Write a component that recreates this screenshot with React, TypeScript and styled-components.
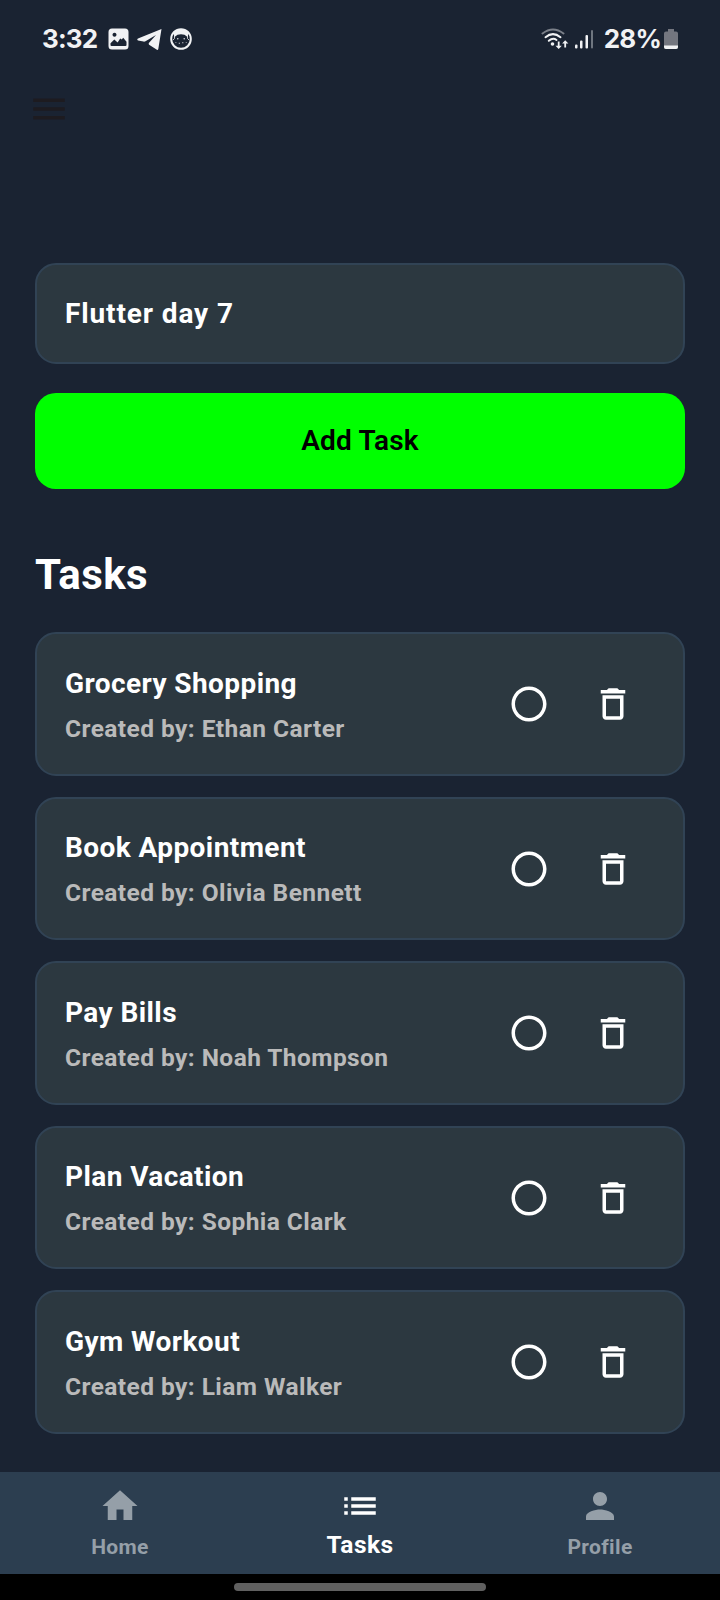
import React from "react";
import styled, { createGlobalStyle } from "styled-components";

const GlobalStyle = createGlobalStyle`
  *, *::before, *::after { box-sizing: border-box; }
  html, body { margin: 0; padding: 0; background: #1a2332; }
  body { font-family: Roboto, "Liberation Sans", sans-serif; }
`;

const Screen = styled.div`
  width: 720px;
  height: 1600px;
  display: flex;
  flex-direction: column;
  background: #1a2332;
  overflow: hidden;
`;

const StatusBar = styled.header`
  height: 77px;
  flex: none;
  padding: 0 42px;
  display: flex;
  align-items: center;
  justify-content: space-between;
  color: #f1f2f4;
`;

const StatusGroup = styled.div<{ $gap: number }>`
  display: flex;
  align-items: center;
  gap: ${(p) => p.$gap}px;
`;

const StatusText = styled.span`
  font-family: Inter, Roboto, sans-serif;
  font-size: 26px;
  line-height: 32px;
  font-weight: 700;
  letter-spacing: -0.8px;
`;

const Clock = styled(StatusText)`
  margin-right: 3px;
`;

const BatteryStatus = styled.div`
  display: flex;
  align-items: center;
  gap: 3px;
  margin-left: 4px;
`;

const AppBar = styled.div`
  height: 65px;
  flex: none;
  padding: 11px 28px;
`;

const MenuButton = styled.button`
  display: block;
  border: 0;
  padding: 0;
  background: none;
  color: #1d1b20;
  line-height: 0;
`;

const Content = styled.main`
  flex: 1;
  min-height: 0;
  padding: 121px 35px 0;
  display: flex;
  flex-direction: column;
`;

const TaskInput = styled.div`
  height: 101px;
  flex: none;
  padding: 0 28px;
  display: flex;
  align-items: center;
  border: 2px solid #314355;
  border-radius: 21px;
  background: #2c3840;
  color: #fff;
  font-size: 28px;
  font-weight: 700;
  letter-spacing: 0.88px;
`;

const AddButton = styled.button`
  height: 96px;
  flex: none;
  margin-top: 28.5px;
  padding: 0;
  border: 0;
  border-radius: 21px;
  background: #00ff00;
  color: #000;
  font: 600 28px/32px Roboto, sans-serif;
  letter-spacing: 0.2px;
`;

const Heading = styled.h1`
  margin: 61px 0 32.5px;
  color: #fff;
  font-size: 42px;
  line-height: 50px;
  font-weight: 700;
  letter-spacing: 0.4px;
`;

const TaskList = styled.ul`
  list-style: none;
  margin: 0;
  padding: 0;
  display: flex;
  flex-direction: column;
  gap: 21px;
`;

const TaskCard = styled.li`
  height: 143.5px;
  flex: none;
  padding: 0 49px 0 28px;
  display: flex;
  align-items: center;
  border: 2px solid #314355;
  border-radius: 21px;
  background: #2c3840;
`;

const TaskText = styled.div`
  flex: 1;
  display: flex;
  flex-direction: column;
  gap: 9px;
  padding-top: 5px;
`;

const TaskTitle = styled.div`
  color: #fff;
  font-size: 28px;
  line-height: 36px;
  font-weight: 700;
  letter-spacing: 0.42px;
`;

const TaskAuthor = styled.div`
  color: #bababa;
  font-size: 24.5px;
  line-height: 36px;
  font-weight: 700;
  letter-spacing: 0.43px;
`;

const TaskActions = styled.div`
  display: flex;
  gap: 42px;
  padding-top: 1px;
  color: #fff;
`;

const NavBar = styled.nav`
  height: 102px;
  flex: none;
  display: flex;
  background: #2c3e50;
`;

const NavItem = styled.div<{ $active?: boolean }>`
  flex: 1;
  display: flex;
  flex-direction: column;
  align-items: center;
  padding-top: 12.5px;
  color: ${(p) => (p.$active ? "#fff" : "#959fa8")};
`;

const NavLabel = styled.span<{ $active?: boolean }>`
  font-size: ${(p) => (p.$active ? 24.5 : 21)}px;
  line-height: 30px;
  margin-top: ${(p) => (p.$active ? 3.5 : 5.5)}px;
  font-weight: 700;
  letter-spacing: ${(p) => (p.$active ? 0.45 : 0.35)}px;
`;

const GestureBar = styled.div`
  height: 26px;
  flex: none;
  padding-top: 9px;
  display: flex;
  justify-content: center;
  background: #000;
`;

const GesturePill = styled.div`
  width: 252px;
  height: 8px;
  border-radius: 4px;
  background: #606060;
`;

const Glyph = styled.svg`
  display: block;
  flex: none;
  fill: currentColor;
`;

const paths = {
  menu: "M3 18h18v-2H3v2zm0-5h18v-2H3v2zm0-7v2h18V6H3z",
  circle: "M12 2C6.47 2 2 6.47 2 12s4.47 10 10 10 10-4.47 10-10S17.53 2 12 2zm0 18c-4.42 0-8-3.58-8-8s3.58-8 8-8 8 3.58 8 8-3.58 8-8 8z",
  trash: "M6 19c0 1.1.9 2 2 2h8c1.1 0 2-.9 2-2V7H6v12zM8 9h8v10H8V9zm7.5-5l-1-1h-5l-1 1H5v2h14V4h-3.5z",
  home: "M10 20v-6h4v6h5v-8h3L12 3 2 12h3v8z",
  list: "M3 13h2v-2H3v2zm0 4h2v-2H3v2zm0-8h2V7H3v2zm4 4h14v-2H7v2zm0 4h14v-2H7v2zM7 7v2h14V7H7z",
  person: "M12 12c2.21 0 4-1.79 4-4s-1.79-4-4-4-4 1.79-4 4 1.79 4 4 4zm0 2c-2.67 0-8 1.34-8 4v2h16v-2c0-2.66-5.33-4-8-4z",
};

function Icon({ name }: { name: keyof typeof paths }) {
  return (
    <Glyph width="42" height="42" viewBox="0 0 24 24">
      <path d={paths[name]} />
    </Glyph>
  );
}

function PhotoIcon() {
  return (
    <Glyph width="21" height="22" viewBox="0 0 21 22">
      <path
        fillRule="evenodd"
        d="M4 0.5h13a3.5 3.5 0 0 1 3.5 3.5v14a3.5 3.5 0 0 1-3.5 3.5H4A3.5 3.5 0 0 1 .5 18V4A3.5 3.5 0 0 1 4 .5zM6.500 4.700a2 2 0 1 0 .01 0zM2.500 17v-1.800l3.800-3.600 3.300 2.800 2.600-4 1.600 1 1.400-1.600 3.300 4v3.200q0 1-1 1h-14q-1 0-1-1z"
      />
    </Glyph>
  );
}

function TelegramIcon() {
  return (
    <Glyph width="25" height="22" viewBox="0 0 25 22">
      <path d="M24.500 1 21.300 21 q-.4 1.400-1.800.6 L12.500 17 q-1.500-1.200-.2-2.500 L19 7 8.500 13.200 q-1 .6-2 .4 L1 12.400 q-1.500-.9 0-1.900z" />
    </Glyph>
  );
}

function CatIcon() {
  return (
    <Glyph width="22" height="22" viewBox="0 0 22 22">
      <circle cx="11" cy="11" r="9.800" fill="none" stroke="currentColor" strokeWidth="2" />
      <path d="M3.500 4Q11 -1 18.500 4L17.500 9 14.500 6.700Q11 6 7.500 6.700L4.500 9z" />
      <path d="M4.500 6v4.500l-1.500 1.500M17.500 6v4.500l1.500 1.500" fill="none" stroke="currentColor" strokeWidth=".8" />
      <circle cx="7.800" cy="10.800" r=".7" />
      <circle cx="14.200" cy="10.800" r=".7" />
      <path d="M8.800 14.800h1v1h-1zM12.300 14.200h1v1h-1zM5.500 14h.8v.8h-.8zM15.800 14h.8v.8h-.8z" />
    </Glyph>
  );
}

function WifiIcon() {
  return (
    <Glyph width="28" height="22" viewBox="0 0 28 22">
      <g fill="none" stroke="currentColor" strokeLinecap="round" strokeWidth="2">
        <path d="M1.500 5.500Q12 -2.500 22.500 5.500" opacity=".45" />
        <path d="M4.500 9.200Q12 3 19.500 9.200" />
        <path d="M7.800 12.800Q12 9.300 15.500 12" />
      </g>
      <circle cx="11.500" cy="16" r="1.800" />
      <path d="M16.800 13.500h1.800v4.300h2.200L17.700 21 14.500 17.800h2.300zM25.100 19.500h-1.800v-4h-2.200l3.100-3.300 3.200 3.300h-2.300z" />
    </Glyph>
  );
}

function SignalIcon() {
  return (
    <Glyph width="19" height="20" viewBox="0 0 19 20">
      <rect x="0" y="15.500" width="2.500" height="4" rx="1" />
      <rect x="5" y="11.500" width="2.500" height="8" rx="1" />
      <rect x="10.500" y="6" width="2.500" height="13.500" rx="1" />
      <rect x="16" y="1" width="2" height="18.500" rx="1" opacity=".4" />
    </Glyph>
  );
}

function BatteryIcon() {
  return (
    <Glyph width="14" height="20" viewBox="0 0 14 20">
      <path
        d="M4 0h6v2.500h2Q14 2.500 14 4.500V18q0 2-2 2H2q-2 0-2-2V4.500q0-2 2-2h2z"
        fill="#73767f"
      />
      <path d="M0 16.500h14V18q0 2-2 2H2q-2 0-2-2z" />
    </Glyph>
  );
}

const tasks = [
  { title: "Grocery Shopping", author: "Ethan Carter" },
  { title: "Book Appointment", author: "Olivia Bennett" },
  { title: "Pay Bills", author: "Noah Thompson" },
  { title: "Plan Vacation", author: "Sophia Clark" },
  { title: "Gym Workout", author: "Liam Walker" },
];

export default function App() {
  return (
    <>
      <GlobalStyle />
      <Screen>
        <StatusBar>
          <StatusGroup $gap={8}>
            <Clock>3:32</Clock>
            <PhotoIcon />
            <TelegramIcon />
            <CatIcon />
          </StatusGroup>
          <StatusGroup $gap={6}>
            <WifiIcon />
            <SignalIcon />
            <BatteryStatus>
              <StatusText>28%</StatusText>
              <BatteryIcon />
            </BatteryStatus>
          </StatusGroup>
        </StatusBar>
        <AppBar>
          <MenuButton aria-label="Menu">
            <Icon name="menu" />
          </MenuButton>
        </AppBar>
        <Content>
          <TaskInput>Flutter day 7</TaskInput>
          <AddButton>Add Task</AddButton>
          <Heading>Tasks</Heading>
          <TaskList>
            {tasks.map((t) => (
              <TaskCard key={t.title}>
                <TaskText>
                  <TaskTitle>{t.title}</TaskTitle>
                  <TaskAuthor>Created by: {t.author}</TaskAuthor>
                </TaskText>
                <TaskActions>
                  <Icon name="circle" />
                  <Icon name="trash" />
                </TaskActions>
              </TaskCard>
            ))}
          </TaskList>
        </Content>
        <NavBar>
          <NavItem>
            <Icon name="home" />
            <NavLabel>Home</NavLabel>
          </NavItem>
          <NavItem $active>
            <Icon name="list" />
            <NavLabel $active>Tasks</NavLabel>
          </NavItem>
          <NavItem>
            <Icon name="person" />
            <NavLabel>Profile</NavLabel>
          </NavItem>
        </NavBar>
        <GestureBar>
          <GesturePill />
        </GestureBar>
      </Screen>
    </>
  );
}
